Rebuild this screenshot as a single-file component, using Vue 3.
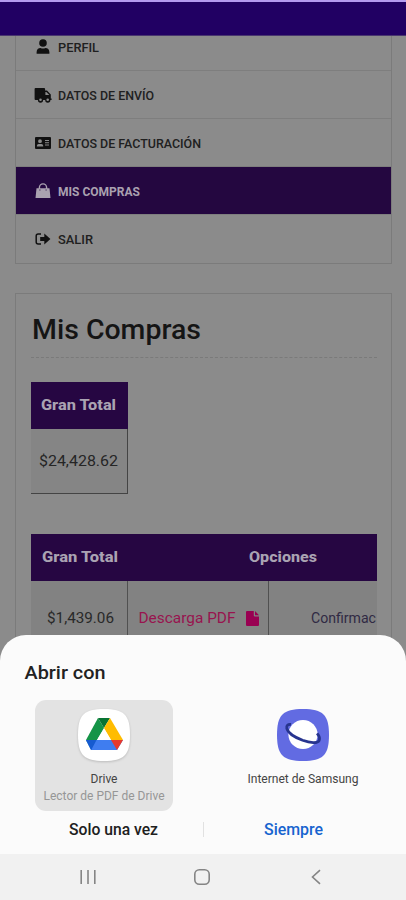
<script setup>
const menu = [
  { id: 'user', label: 'PERFIL', width: 41 },
  { id: 'truck', label: 'DATOS DE ENVÍO', width: 96 },
  { id: 'card', label: 'DATOS DE FACTURACIÓN', width: 143 },
  { id: 'bag', label: 'MIS COMPRAS', active: true, width: 82 },
  { id: 'exit', label: 'SALIR', width: 35 },
]
</script>

<template>
  <div class="screen">
    <header class="topbar"></header>
    <main class="page">
      <nav class="menu">
        <a v-for="item in menu" :key="item.id" class="menu-item" :class="[item.id, { active: item.active }]">
          <svg class="menu-icon" viewBox="0 0 18 18" fill="currentColor">
            <template v-if="item.id === 'user'">
              <circle cx="9" cy="5" r="3.8" />
              <path d="M2.6 15.8v-1.6c0-2.7 1.6-4.2 4-4.2q2.4 1 4.8 0c2.4 0 4 1.5 4 4.2v1.6z" />
            </template>
            <path v-else-if="item.id === 'truck'" fill-rule="evenodd" d="M1.5 2h8.6q1 0 1 1v1.6h1.9l3.8 3.8v4.2h.8v1.5h-1.2a2.6 2.6 0 0 1-5.2 0H9.1a2.6 2.6 0 0 1-5.2 0H1.5q-.9 0-.9-1V3q0-1 .9-1zm9.9 4v3.1h4L12.3 6zM6.5 12.5a1.3 1.3 0 1 0 0 2.6 1.3 1.3 0 0 0 0-2.6zm7.2 0a1.3 1.3 0 1 0 0 2.6 1.3 1.3 0 0 0 0-2.6z" />
            <path v-else-if="item.id === 'card'" fill-rule="evenodd" d="M2 3h14q1 0 1 1v10q0 1-1 1H2q-1 0-1-1V4q0-1 1-1zm4 2.3a1.9 1.9 0 1 0 0 3.8 1.9 1.9 0 0 0 0-3.8zM2.9 12.6h6.3v-.8q0-1.8-1.8-1.8H4.7q-1.8 0-1.8 1.8zM11 6v.9h4V6zm0 2.3v.9h4v-.9zm0 2.3v.9h4v-.9z" />
            <path v-else-if="item.id === 'bag'" fill-rule="evenodd" d="M2.5 6.2h2.2V5.5a4.3 4.3 0 0 1 8.6 0v.7h2.2l1 9.8H1.5zm3.6 0h5.8V5.5a2.9 2.9 0 0 0-5.8 0zM5.4 7.5v1.1h1V7.5zm6.2 0v1.1h1V7.5z" />
            <template v-else>
              <path d="M7 4H4.2Q2.2 4 2.2 6v6q0 2 2 2H7" fill="none" stroke="currentColor" stroke-width="1.5" />
              <path d="M6.2 6.9h4.1V3.4L16.4 9l-6.1 5.6v-3.5H6.2z" />
            </template>
          </svg>
          <svg class="menu-label" height="18" :width="item.width + 2">
            <text x="0" y="13.5" :textLength="item.width" lengthAdjust="spacingAndGlyphs">{{ item.label }}</text>
          </svg>
        </a>
      </nav>

      <section class="orders">
        <h1><svg width="174" height="36"><text x="1" y="27" textLength="169" lengthAdjust="spacingAndGlyphs">Mis Compras</text></svg></h1>
        <div class="summary">
          <div class="head"><svg width="78" height="24"><text x="0" y="16" textLength="75" lengthAdjust="spacingAndGlyphs">Gran Total</text></svg></div>
          <div class="sum-value"><svg width="80" height="24"><text x="0" y="17" textLength="79" lengthAdjust="spacingAndGlyphs">$24,428.62</text></svg></div>
        </div>
        <div class="detail">
          <div class="head detail-head">
            <svg width="77" height="24"><text x="0" y="16" textLength="76" lengthAdjust="spacingAndGlyphs">Gran Total</text></svg>
            <svg class="options" width="70" height="24"><text x="1" y="16" textLength="68" lengthAdjust="spacingAndGlyphs">Opciones</text></svg>
          </div>
          <div class="detail-row">
            <div class="cell amount"><svg width="69" height="24"><text x="0" y="17" textLength="67" lengthAdjust="spacingAndGlyphs">$1,439.06</text></svg></div>
            <div class="cell download">
              <svg width="98" height="24"><text x="0.5" y="17" textLength="97" lengthAdjust="spacingAndGlyphs">Descarga PDF</text></svg>
              <svg class="file" viewBox="0 0 13 15"><path d="M1 0h6.8v4.6q0 .8.8.8H13V14q0 1-1 1H1q-1 0-1-1V1q0-1 1-1zm8 0 4 4.2H9z" /></svg>
            </div>
            <div class="cell confirm"><svg width="67" height="24"><text x="1" y="17" textLength="65" lengthAdjust="spacingAndGlyphs">Confirmac</text></svg></div>
          </div>
        </div>
      </section>
    </main>

    <aside class="overlay">
      <div class="sheet">
        <h2><svg width="84" height="26"><text x="0.5" y="20" textLength="81" lengthAdjust="spacingAndGlyphs">Abrir con</text></svg></h2>
        <div class="apps">
          <div class="app selected">
            <svg class="app-icon drive" viewBox="0 0 54 54">
              <path class="tile" d="M27 1C47 1 53 7 53 27S47 53 27 53 1 47 1 27 7 1 27 1z" />
              <path fill="#159447" d="M21 10 9 32l5.2 10L27 20z" />
              <path fill="#087333" d="M21 10h12l-6 10z" />
              <path fill="#ffbc00" d="M33 10 27 20l7 12h12z" />
              <path fill="#3f7df0" d="M9 32h37l-6 10H14z" />
              <path fill="#165bd0" d="M9 32h10.5L14.2 42z" />
              <path fill="#e83a2c" d="M34 32h12l-6 10z" />
              <path fill="#fff" d="m27 20.5-7 11.5h14z" />
            </svg>
            <svg class="app-name" width="132" height="17"><text x="66" y="13" text-anchor="middle" textLength="27" lengthAdjust="spacingAndGlyphs">Drive</text></svg>
            <svg class="app-sub" width="132" height="17"><text x="66" y="12.5" text-anchor="middle" textLength="121" lengthAdjust="spacingAndGlyphs">Lector de PDF de Drive</text></svg>
          </div>
          <div class="app">
            <svg class="app-icon" viewBox="0 0 54 54">
              <path fill="#626be2" d="M27 1C47 1 53 7 53 27S47 53 27 53 1 47 1 27 7 1 27 1z" />
              <circle cx="27" cy="26.5" r="14.6" fill="#fff" />
              <path d="M15 16.5c-3-.5-5 1.2-4.2 4 1.2 4.3 8 8.8 15.8 11.8 7.8 2.8 15 3.3 16.5.3 1-2-.1-5-2-7.2" fill="none" stroke="#27348f" stroke-width="2.8" />
            </svg>
            <svg class="app-name" width="132" height="17"><text x="66" y="13" text-anchor="middle" textLength="111" lengthAdjust="spacingAndGlyphs">Internet de Samsung</text></svg>
          </div>
        </div>
        <div class="actions">
          <button><svg width="92" height="24"><text x="2" y="17" textLength="89" lengthAdjust="spacingAndGlyphs">Solo una vez</text></svg></button>
          <span class="divider"></span>
          <button class="always"><svg width="61" height="24"><text x="2" y="17" textLength="59" lengthAdjust="spacingAndGlyphs">Siempre</text></svg></button>
        </div>
      </div>
      <footer class="navbar">
        <svg viewBox="0 0 18 18"><path d="M2.2 2v14M9 2v14M15.8 2v14" /></svg>
        <svg viewBox="0 0 18 18"><rect x="1.8" y="1.8" width="14.4" height="14.4" rx="4.5" /></svg>
        <svg viewBox="0 0 18 18"><path d="m13 2.2-7.5 6.8 7.5 6.8" /></svg>
      </footer>
    </aside>
  </div>
</template>

<style>
body { margin: 0; overflow: hidden; }
</style>

<style scoped>
* { box-sizing: border-box; }
.screen { position: relative; width: 406px; height: 900px; overflow: hidden; background: #8b8b8b; font-family: Roboto, sans-serif; }
svg { display: block; flex: none; }
text { fill: currentColor; }
.topbar { height: 36px; border-top: 2px solid #b49af0; background: #210063; border-bottom: 1px solid #49366f; }
.page { padding: 0 14px 0 15px; }
.menu { border: 1px solid #7b7b7b; border-top: 0; height: 228px; }
.menu-item { display: flex; align-items: center; height: 48px; padding-left: 18px; gap: 6px; color: #202020; border-bottom: 1px solid #7e7e7e; font-size: 12px; font-weight: 500; }
.menu-item:first-child { height: 35px; padding-bottom: 12px; }
.menu-item:last-child { border-bottom: 0; }
.menu-icon { width: 18px; height: 18px; color: #111; }
.active, .active .menu-icon { color: #aaa1b0; }
.active { background: #240740; font-weight: 700; }
.orders { margin-top: 29px; padding: 15px 14px 0 15px; height: 430px; border: 1px solid #7b7b7b; }
h1 { margin: 0; height: 49px; padding-top: 3px; border-bottom: 1px dashed #7a7a7a; font-size: 28px; font-weight: 500; color: #151515; }
.summary { width: 97px; height: 112px; margin-top: 24px; border-right: 1px solid #444; border-bottom: 1px solid #444; background: #858585; }
.head { display: flex; align-items: center; justify-content: center; height: 47px; background: #260642; color: #aaa3b2; font-size: 15px; font-weight: 800; }
.summary .head { width: 97px; }
.sum-value { display: flex; align-items: center; justify-content: center; height: 64px; font-size: 15px; color: #252525; }
.detail { margin-top: 40px; background: #828282; }
.detail-head { justify-content: flex-start; padding-left: 11px; }
.options { margin-left: 129px; }
.detail-row { display: flex; height: 74px; }
.cell { display: flex; align-items: center; border-right: 1px solid #505050; font-size: 15px; color: #292929; }
.amount { width: 97px; padding-left: 16px; }
.download { width: 141px; padding-left: 10px; gap: 10px; color: #98144f; }
.file { width: 13px; height: 15px; fill: #990052; }
.confirm { flex: 1; border: 0; justify-content: flex-end; color: #302a44; }
.overlay { position: absolute; left: 0; right: 0; bottom: 0; }
.sheet { height: 219px; padding: 24px 29px 0; border-radius: 26px 26px 0 0; background: #fbfbfb; }
h2 { margin: 0 0 0 -5px; height: 41px; font-size: 19px; font-weight: 500; color: #222; }
.apps { display: flex; justify-content: space-between; padding: 0 5px 0 6px; }
.app { display: flex; flex-direction: column; align-items: center; width: 138px; height: 111px; padding-top: 8px; border-radius: 11px; }
.selected { background: #e3e3e3; }
.app-icon { width: 54px; height: 54px; }
.tile { fill: #fff; }
.drive { filter: drop-shadow(0 1px 1px #bbb); }
.app-name { margin-top: 8px; font-size: 12px; color: #444; }
.app-sub { font-size: 12px; color: #969696; }
.actions { display: grid; grid-template-columns: 1fr 1px 1fr; align-items: center; padding-top: 4px; height: 33px; }
button { display: flex; justify-content: center; padding: 0; border: 0; background: none; font: 500 16px Roboto, sans-serif; color: #202020; }
.actions button:first-child { padding-right: 5px; }
.always { padding-left: 5px; color: #1764cf; }
.divider { height: 15px; background: #e1e1e1; }
.navbar { display: flex; justify-content: space-between; height: 46px; padding: 14px 81px 0 79px; background: #f1f1f1; }
.navbar svg { width: 18px; height: 18px; fill: none; stroke: #858585; stroke-width: 1.6; }
</style>
